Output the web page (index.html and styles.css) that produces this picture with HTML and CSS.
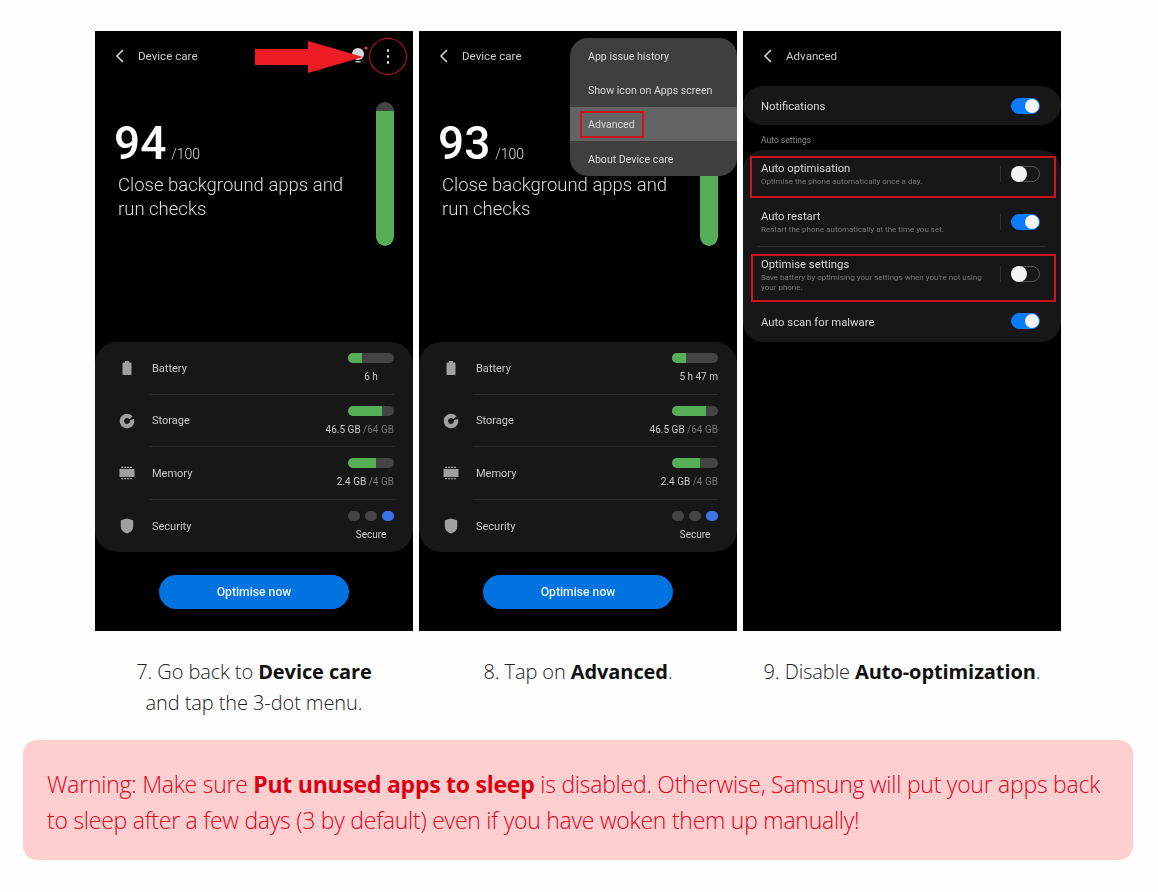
FILE: index.html
```html
<!DOCTYPE html>
<html lang="en">
<head>
    <meta charset="UTF-8">
    <title>Device care steps</title>
    <link rel="stylesheet" href="styles.css">
</head>
<body>
    <svg class="defs" width="0" height="0">
        <symbol id="i-battery" viewBox="0 0 20 20"><path d="M8 3h4v1.500h1.500a1 1 0 0 1 1 1V16a1 1 0 0 1-1 1h-7a1 1 0 0 1-1-1V5.500a1 1 0 0 1 1-1H8z"/></symbol>
        <symbol id="i-storage" viewBox="0 0 20 20"><circle cx="10" cy="10" r="5.100" fill="none" stroke="#a0a0a0" stroke-width="4.400" stroke-dasharray="29 3" transform="rotate(-15 10 10)"/></symbol>
        <symbol id="i-memory" viewBox="0 0 20 20"><path d="M2.500 6h15v8h-15zM4 3.800h2V5H4zM7 3.800h2V5H7zM10 3.800h2V5h-2zM13 3.800h2V5h-2zM4 15h2v1.200H4zM7 15h2v1.200H7zM10 15h2v1.200h-2zM13 15h2v1.200h-2z"/></symbol>
        <symbol id="i-shield" viewBox="0 0 20 20"><path d="M10 2.500l6.200 1.800v6.200c0 3.500-2.800 6-6.200 7-3.400-1-6.200-3.500-6.200-7V4.300z"/></symbol>
    </svg>

    <div class="steps">
        <div class="step">
            <div class="phone">
                <div class="phone-head">
                    <svg class="back" width="10" height="14" viewBox="0 0 10 14"><path d="M8 1L2 7l6 6"/></svg>
                    <span>Device care</span>
                </div>
                <div class="score-area">
                    <div class="score-text">
                        <div class="score"><b>94</b> <span>/100</span></div>
                        <p>Close background apps and run checks</p>
                    </div>
                    <div class="score-bar"><div class="score-fill"></div></div>
                </div>
                <div class="care-card">
                    <div class="care-row">
                        <svg class="care-icon"><use href="#i-battery"/></svg>
                        <div class="care-main">
                            <span>Battery</span>
                            <div class="care-value">
                                <div class="meter"><div class="meter-fill w30"></div></div>
                                <div class="value-mid">6 h</div>
                            </div>
                        </div>
                    </div>
                    <div class="care-row">
                        <svg class="care-icon"><use href="#i-storage"/></svg>
                        <div class="care-main">
                            <span>Storage</span>
                            <div class="care-value">
                                <div class="meter"><div class="meter-fill w73"></div></div>
                                <div>46.5 GB <em>/64 GB</em></div>
                            </div>
                        </div>
                    </div>
                    <div class="care-row">
                        <svg class="care-icon"><use href="#i-memory"/></svg>
                        <div class="care-main">
                            <span>Memory</span>
                            <div class="care-value">
                                <div class="meter"><div class="meter-fill w60"></div></div>
                                <div>2.4 GB <em>/4 GB</em></div>
                            </div>
                        </div>
                    </div>
                    <div class="care-row">
                        <svg class="care-icon"><use href="#i-shield"/></svg>
                        <div class="care-main">
                            <span>Security</span>
                            <div class="care-value">
                                <div class="lights"><i></i><i></i><i class="on"></i></div>
                                <div class="value-mid">Secure</div>
                            </div>
                        </div>
                    </div>
                </div>
                <div class="optimise">Optimise now</div>

                <svg class="bulb" width="20" height="22" viewBox="0 0 20 22">
                    <circle cx="8" cy="9" r="6" fill="#d8d8d8"/>
                    <rect x="5.500" y="16" width="5" height="1.500" fill="#bbb"/>
                    <circle cx="16" cy="3" r="1.500" fill="#e2474f"/>
                </svg>
                <svg class="arrow" width="108" height="32" viewBox="0 0 108 32"><path d="M0 8h53V0l55 16-55 16v-8H0z"/></svg>
                <div class="ring">
                    <i></i><i></i><i></i>
                </div>
            </div>
            <div class="caption">7. Go back to <b>Device care</b><br>and tap the 3-dot menu.</div>
        </div>

        <div class="step">
            <div class="phone">
                <div class="phone-head">
                    <svg class="back" width="10" height="14" viewBox="0 0 10 14"><path d="M8 1L2 7l6 6"/></svg>
                    <span>Device care</span>
                </div>
                <div class="score-area">
                    <div class="score-text">
                        <div class="score"><b>93</b> <span>/100</span></div>
                        <p>Close background apps and run checks</p>
                    </div>
                    <div class="score-bar"><div class="score-fill"></div></div>
                </div>
                <div class="care-card">
                    <div class="care-row">
                        <svg class="care-icon"><use href="#i-battery"/></svg>
                        <div class="care-main">
                            <span>Battery</span>
                            <div class="care-value">
                                <div class="meter"><div class="meter-fill w30"></div></div>
                                <div class="value-mid wide">5 h 47 m</div>
                            </div>
                        </div>
                    </div>
                    <div class="care-row">
                        <svg class="care-icon"><use href="#i-storage"/></svg>
                        <div class="care-main">
                            <span>Storage</span>
                            <div class="care-value">
                                <div class="meter"><div class="meter-fill w73"></div></div>
                                <div>46.5 GB <em>/64 GB</em></div>
                            </div>
                        </div>
                    </div>
                    <div class="care-row">
                        <svg class="care-icon"><use href="#i-memory"/></svg>
                        <div class="care-main">
                            <span>Memory</span>
                            <div class="care-value">
                                <div class="meter"><div class="meter-fill w60"></div></div>
                                <div>2.4 GB <em>/4 GB</em></div>
                            </div>
                        </div>
                    </div>
                    <div class="care-row">
                        <svg class="care-icon"><use href="#i-shield"/></svg>
                        <div class="care-main">
                            <span>Security</span>
                            <div class="care-value">
                                <div class="lights"><i></i><i></i><i class="on"></i></div>
                                <div class="value-mid">Secure</div>
                            </div>
                        </div>
                    </div>
                </div>
                <div class="optimise">Optimise now</div>

                <div class="menu">
                    <div class="menu-item">App issue history</div>
                    <div class="menu-item">Show icon on Apps screen</div>
                    <div class="menu-item active"><span class="menu-mark">Advanced</span></div>
                    <div class="menu-item">About Device care</div>
                </div>
            </div>
            <div class="caption">8. Tap on <b>Advanced</b>.</div>
        </div>

        <div class="step">
            <div class="phone">
                <div class="phone-head">
                    <svg class="back" width="10" height="14" viewBox="0 0 10 14"><path d="M8 1L2 7l6 6"/></svg>
                    <span>Advanced</span>
                </div>
                <div class="set-card single">
                    <div class="set-title">Notifications</div>
                    <span class="toggle on"></span>
                </div>
                <div class="set-label">Auto settings</div>
                <div class="set-group">
                    <div class="set-row r1">
                        <div class="set-text">
                            <div class="set-title">Auto optimisation</div>
                            <div class="set-sub">Optimise the phone automatically once a day.</div>
                        </div>
                        <span class="set-line"></span>
                        <span class="toggle"></span>
                        <div class="mark m1"></div>
                    </div>
                    <div class="set-row r2">
                        <div class="set-text">
                            <div class="set-title">Auto restart</div>
                            <div class="set-sub">Restart the phone automatically at the time you set.</div>
                        </div>
                        <span class="set-line"></span>
                        <span class="toggle on"></span>
                    </div>
                    <div class="set-row r3">
                        <div class="set-text">
                            <div class="set-title">Optimise settings</div>
                            <div class="set-sub">Save battery by optimising your settings when you're not using your phone.</div>
                        </div>
                        <span class="set-line"></span>
                        <span class="toggle"></span>
                        <div class="mark m2"></div>
                    </div>
                    <div class="set-row r4">
                        <div class="set-text">
                            <div class="set-title">Auto scan for malware</div>
                        </div>
                        <span class="toggle on"></span>
                    </div>
                </div>
            </div>
            <div class="caption">9. Disable <b>Auto-optimization</b>.</div>
        </div>
    </div>

    <div class="warning">Warning: Make sure <b>Put unused apps to sleep</b> is disabled. Otherwise, Samsung will put your apps back<br>to sleep after a few days (3 by default) even if you have woken them up manually!</div>
</body>
</html>
```

FILE: styles.css
```css
body {
    margin: 0;
    padding: 31px 25px 0 23px;
    background: #fefefe;
    font-family: "Open Sans", sans-serif;
    color: #222;
}
.defs {
    position: absolute;
}
.steps {
    display: flex;
    justify-content: center;
    gap: 6px;
}
.step {
    width: 318px;
}
.phone {
    position: relative;
    display: flex;
    flex-direction: column;
    height: 600px;
    background: #000;
    color: #e4e4e4;
    font-family: Roboto, sans-serif;
    filter: blur(0.35px);
}
.phone-head {
    display: flex;
    align-items: center;
    gap: 13px;
    height: 50px;
    padding-left: 20px;
    font-size: 11.600px;
    color: #ccc;
}
.back {
    width: 10px;
    fill: none;
    stroke: #ddd;
    stroke-width: 1.500;
}
.score-area {
    flex: 1;
    display: flex;
    justify-content: space-between;
    padding: 21px 19px 0 19px;
}
.score {
    margin-top: 14px;
    color: #fff;
}
.score b {
    font-size: 46px;
    font-weight: 500;
    line-height: 54px;
}
.score span {
    margin-left: 1px;
    font-size: 14px;
    font-weight: 300;
    color: #ddd;
}
.score-text p {
    width: 240px;
    margin: 3px 0 0 4px;
    font-size: 18.500px;
    font-weight: 300;
    line-height: 24px;
    color: #ddd;
}
.score-bar {
    width: 18px;
    height: 144px;
    background: #444;
    border-radius: 9px;
    overflow: hidden;
}
.score-fill {
    height: 135px;
    margin-top: 9px;
    background: #55ad55;
    border-radius: 0 0 9px 9px;
}
.care-card {
    height: 210px;
    padding-right: 19px;
    background: #171717;
    border-radius: 22px;
    font-size: 11px;
    color: #c8c8c8;
}
.care-row {
    display: flex;
    height: 52.500px;
}
.care-icon {
    flex: none;
    width: 20px;
    height: 20px;
    margin: 16px 12px 0 22px;
    fill: #a0a0a0;
}
.care-main {
    flex: 1;
    display: flex;
    justify-content: space-between;
    align-items: center;
    padding: 1px 0 0 3px;
    border-bottom: 1px solid #2a2a2a;
}
.care-row:last-child .care-main {
    border-bottom: none;
}
.care-value {
    display: flex;
    flex-direction: column;
    align-items: flex-end;
    gap: 8px;
    font-size: 10px;
    line-height: 12px;
    margin-top: 0;
}
.care-value em {
    font-style: normal;
    color: #777;
}
.value-mid {
    width: 46px;
    text-align: center;
    white-space: nowrap;
}
.value-mid.wide {
    text-align: right;
}
.meter {
    width: 46px;
    height: 10px;
    background: #444;
    border-radius: 5px;
    overflow: hidden;
}
.meter-fill {
    height: 100%;
    background: #55ad55;
}
.w30 { width: 30%; }
.w73 { width: 73%; }
.w60 { width: 61%; }
.lights {
    display: flex;
    justify-content: space-between;
    width: 46px;
}
.lights i {
    width: 12px;
    height: 10px;
    background: #444;
    border-radius: 5px;
}
.lights i.on {
    background: #3a75e8;
}
.optimise {
    align-self: center;
    width: 190px;
    height: 34px;
    margin: 23px 0 22px;
    background: #0073e0;
    border-radius: 17px;
    color: #e8f2ff;
    font-size: 12.200px;
    font-weight: 500;
    line-height: 34px;
    text-align: center;
}
.bulb {
    position: absolute;
    left: 255px;
    top: 14px;
}
.arrow {
    position: absolute;
    left: 160px;
    top: 10px;
    fill: #ee1c25;
}
.ring {
    position: absolute;
    left: 274px;
    top: 7px;
    display: flex;
    flex-direction: column;
    align-items: center;
    justify-content: center;
    gap: 3.500px;
    width: 36px;
    height: 35px;
    border: 1.500px solid #c8141e;
    border-radius: 50%;
}
.ring i {
    width: 2.500px;
    height: 2.500px;
    background: #e8e8e8;
    border-radius: 50%;
}
.menu {
    position: absolute;
    right: 0;
    top: 7px;
    width: 167px;
    background: #3f3f3f;
    border-radius: 18px;
    overflow: hidden;
    font-size: 10.600px;
    color: #d8d8d8;
}
.menu-item {
    display: flex;
    align-items: center;
    height: 34.400px;
    padding: 2px 0 0 18px;
    box-sizing: border-box;
}
.menu-item.active {
    background: #636363;
}
.menu-mark {
    margin-left: -8px;
    padding: 5px 0 5px 6px;
    width: 54px;
    border: 2px solid #cf1420;
}
.set-card.single {
    display: flex;
    align-items: center;
    justify-content: space-between;
    height: 39px;
    margin-top: 5px;
    padding: 1px 21px 0 18px;
    box-sizing: border-box;
    background: #171717;
    border-radius: 20px;
}
.single .set-title {
    margin-top: 2px;
}
.set-label {
    margin: 10px 0 4px 18px;
    font-size: 8.500px;
    line-height: 11px;
    color: #8c8c8c;
}
.set-group {
    height: 192px;
    background: #171717;
    border-radius: 20px;
}
.set-row {
    position: relative;
    display: flex;
    align-items: center;
    padding: 0 21px 0 18px;
}
.r1 { height: 48px; }
.r2 { height: 48px; }
.r3 { height: 54px; border-top: 1px solid #2e2e2e; margin: 0 15px; padding: 1px 6px 0 3px; box-sizing: border-box; }
.r3 .set-text { margin-top: 2px; }
.r4 { height: 42px; }
.r4 .set-text { margin-top: 3px; }
.set-text {
    flex: 1;
}
.set-title {
    font-size: 11.300px;
    line-height: 14px;
    color: #d8d8d8;
}
.set-sub {
    width: 232px;
    margin-top: 1px;
    font-size: 8px;
    line-height: 9.500px;
    color: #777;
}
.set-line {
    width: 1px;
    height: 16px;
    margin-right: 10px;
    background: #2e2e2e;
}
.toggle {
    position: relative;
    flex: none;
    box-sizing: border-box;
    width: 29px;
    height: 16px;
    border: 1px solid #555;
    border-radius: 8px;
}
.toggle::after {
    content: "";
    position: absolute;
    left: -1px;
    top: -1px;
    width: 16px;
    height: 16px;
    background: #f4f4f4;
    border-radius: 50%;
}
.toggle.on {
    background: #0a7cff;
    border-color: #0a7cff;
}
.toggle.on::after {
    left: auto;
    right: 0;
    top: 0;
    width: 14px;
    height: 14px;
}
.mark {
    position: absolute;
    border: 2px solid #cf1420;
    box-sizing: border-box;
}
.m1 {
    left: 7px;
    right: 5px;
    top: 6px;
    height: 42px;
}
.m2 {
    left: -7px;
    right: -10px;
    top: 7px;
    height: 48px;
}
.caption {
    margin-top: 25px;
    font-size: 20px;
    font-weight: 300;
    letter-spacing: -0.09px;
    line-height: 31px;
    text-align: center;
    white-space: nowrap;
}
.caption b {
    font-weight: 700;
    color: #111;
}
.warning {
    box-sizing: border-box;
    height: 120px;
    margin-top: 22px;
    padding: 26px 24px;
    background: #ffcfcf;
    border-radius: 14px;
    color: #e0001b;
    font-size: 23px;
    font-weight: 300;
    letter-spacing: -0.25px;
    line-height: 36px;
}
.warning b {
    font-weight: 700;
    color: #d90012;
}
```
